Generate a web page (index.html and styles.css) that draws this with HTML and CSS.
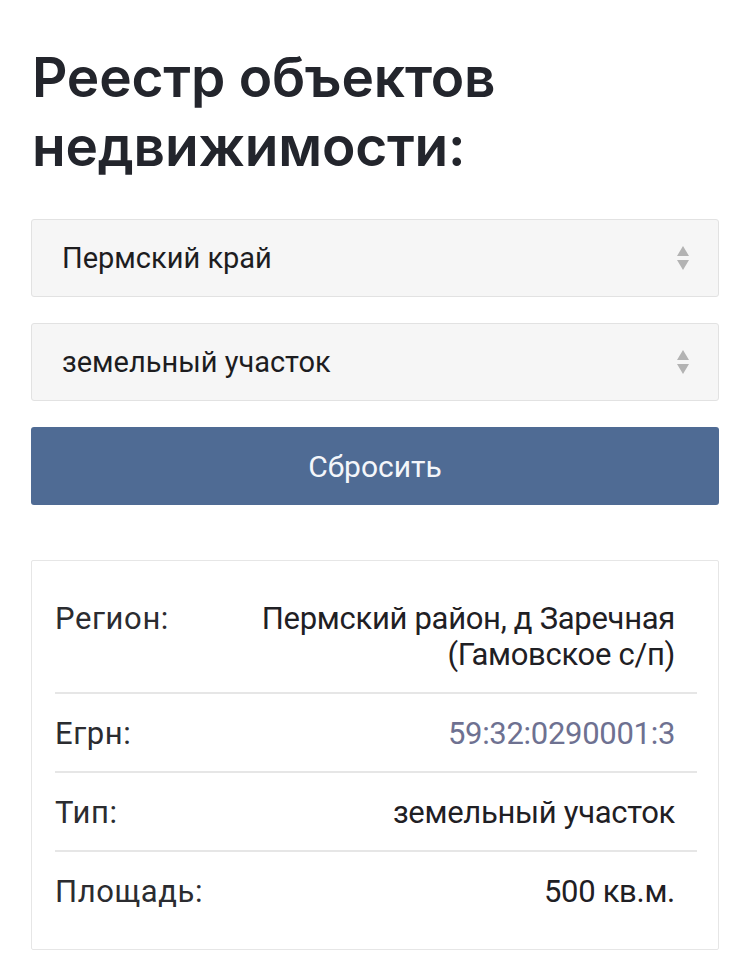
FILE: index.html
```html
<!DOCTYPE html>
<html lang="ru">
<head>
<meta charset="utf-8">
<title>Реестр объектов недвижимости</title>
<link rel="stylesheet" href="styles.css">
</head>
<body>
<main class="page">
  <h1 class="title">Реестр объектов<br>недвижимости:</h1>
  <div class="select">
    <span class="select-text">Пермский край</span>
    <span class="arrows"><span class="up"></span><span class="down"></span></span>
  </div>
  <div class="select">
    <span class="select-text">земельный участок</span>
    <span class="arrows"><span class="up"></span><span class="down"></span></span>
  </div>
  <button class="reset">Сбросить</button>
  <section class="card">
    <div class="row">
      <span class="label">Регион:</span>
      <span class="value">Пермский район, д Заречная<br>(Гамовское с/п)</span>
    </div>
    <div class="row">
      <span class="label">Егрн:</span>
      <span class="value link">59:32:0290001:3</span>
    </div>
    <div class="row">
      <span class="label">Тип:</span>
      <span class="value">земельный участок</span>
    </div>
    <div class="row">
      <span class="label">Площадь:</span>
      <span class="value">500 кв.м.</span>
    </div>
  </section>
</main>
</body>
</html>
```
FILE: styles.css
```css
html, body {
  margin: 0;
  padding: 0;
  background: #ffffff;
}
body {
  font-family: Roboto, "Liberation Sans", sans-serif;
  color: #222428;
}
.page {
  width: 688px;
  padding: 43px 31px 0 31px;
  display: flex;
  flex-direction: column;
}
.title {
  margin: 0 0 38px 1px;
  font-family: Inter, "Noto Sans", sans-serif;
  font-weight: 600;
  font-size: 55px;
  line-height: 69px;
  letter-spacing: -0.2px;
  color: #23252c;
}
.select {
  box-sizing: border-box;
  height: 78px;
  margin-bottom: 26px;
  background: #f6f6f6;
  border: 1px solid #e2e2e2;
  border-radius: 3px;
  display: flex;
  align-items: center;
  justify-content: space-between;
  padding: 0 29px 0 30px;
}
.select-text {
  font-size: 29px;
  color: #1d1d1f;
}
.arrows {
  display: flex;
  flex-direction: column;
  gap: 4px;
  align-items: center;
}
.up, .down {
  width: 0;
  height: 0;
  border-left: 6px solid transparent;
  border-right: 6px solid transparent;
}
.up { border-bottom: 10px solid #b3b3b3; }
.down { border-top: 10px solid #b3b3b3; }
.reset {
  height: 78px;
  margin: 0 0 55px 0;
  border: none;
  border-radius: 3px;
  background: #4f6b94;
  color: #f4f6fa;
  font-family: Roboto, "Liberation Sans", sans-serif;
  font-size: 30px;
  cursor: pointer;
}
.card {
  box-sizing: border-box;
  border: 1px solid #e6e6e6;
  border-radius: 2px;
  padding: 18px 21px 20px 23px;
  display: flex;
  flex-direction: column;
}
.row {
  display: flex;
  justify-content: space-between;
  align-items: flex-start;
  padding: 22px 22px 19px 0;
  font-size: 31px;
  line-height: 36px;
  border-bottom: 2px solid #e6e6e6;
}
.row:last-child {
  border-bottom: none;
}
.label {
  color: #2b2c30;
  letter-spacing: 0.6px;
}
.value {
  text-align: right;
  color: #1f2024;
  letter-spacing: -0.3px;
}
.value.link {
  color: #6e7191;
}
```
